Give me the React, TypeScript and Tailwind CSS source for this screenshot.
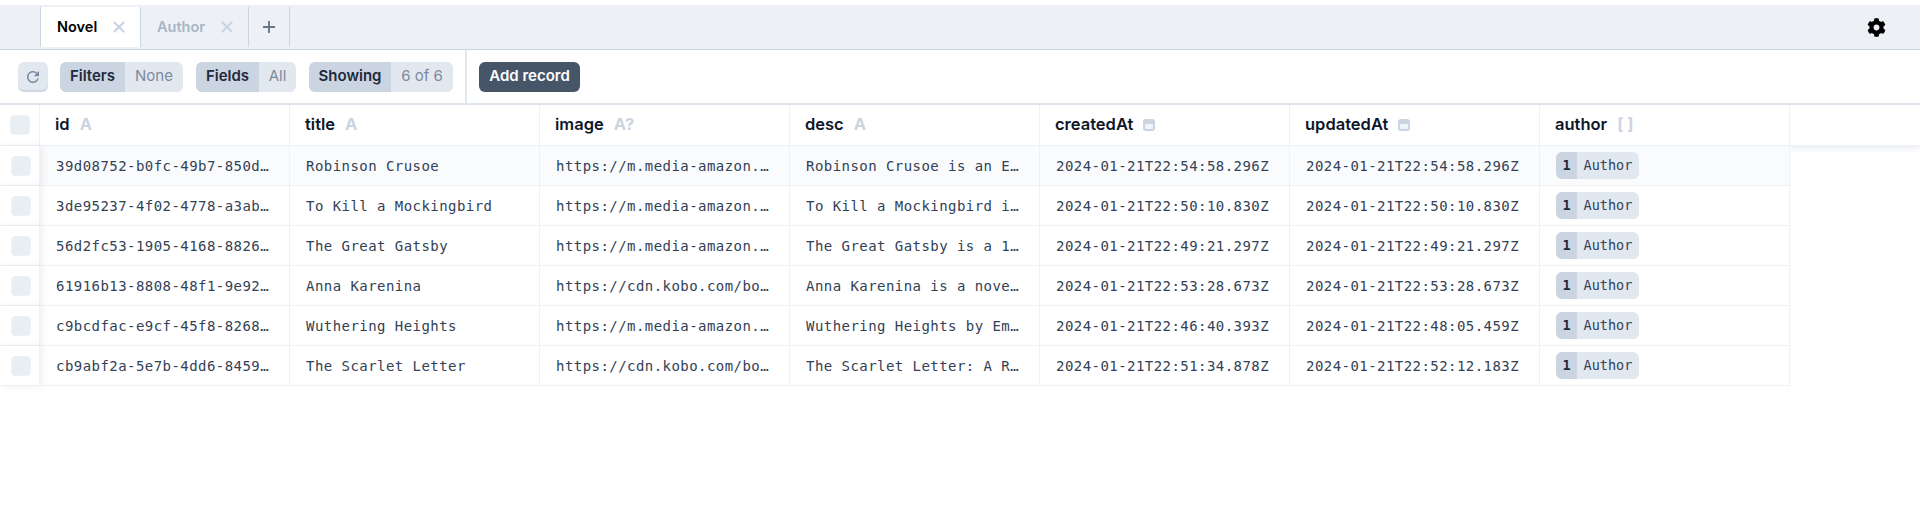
import { Plus, X } from 'lucide-react'
import { FaCog } from 'react-icons/fa'
import { MdRefresh } from 'react-icons/md'

const rows = [
  ['39d08752-b0fc-49b7-850d-3f1a9c2e7b10', 'Robinson Crusoe', 'https://m.media-amazon.com/images/I/71robinson.jpg', 'Robinson Crusoe is an English adventure novel', '2024-01-21T22:54:58.296Z', '2024-01-21T22:54:58.296Z'],
  ['3de95237-4f02-4778-a3ab-91c4d7e2a608', 'To Kill a Mockingbird', 'https://m.media-amazon.com/images/I/81mocking.jpg', 'To Kill a Mockingbird is a novel by Harper Lee', '2024-01-21T22:50:10.830Z', '2024-01-21T22:50:10.830Z'],
  ['56d2fc53-1905-4168-8826-07b3e5f1c942', 'The Great Gatsby', 'https://m.media-amazon.com/images/I/71gatsby.jpg', 'The Great Gatsby is a 1925 novel by F. Scott', '2024-01-21T22:49:21.297Z', '2024-01-21T22:49:21.297Z'],
  ['61916b13-8808-48f1-9e92-c5a07d3b8e14', 'Anna Karenina', 'https://cdn.kobo.com/book-images/anna-karenina.jpg', 'Anna Karenina is a novel by Leo Tolstoy', '2024-01-21T22:53:28.673Z', '2024-01-21T22:53:28.673Z'],
  ['c9bcdfac-e9cf-45f8-8268-b2d6f4a1e037', 'Wuthering Heights', 'https://m.media-amazon.com/images/I/81wuthering.jpg', 'Wuthering Heights by Emily Bronte', '2024-01-21T22:46:40.393Z', '2024-01-21T22:48:05.459Z'],
  ['cb9abf2a-5e7b-4dd6-8459-e1f0c7b3d286', 'The Scarlet Letter', 'https://cdn.kobo.com/book-images/scarlet-letter.jpg', 'The Scarlet Letter: A Romance by Nathaniel', '2024-01-21T22:51:34.878Z', '2024-01-21T22:52:12.183Z'],
]

const columns = [
  { name: 'id', type: 'A' },
  { name: 'title', type: 'A' },
  { name: 'image', type: 'A?' },
  { name: 'desc', type: 'A' },
  { name: 'createdAt', type: 'date' },
  { name: 'updatedAt', type: 'date' },
  { name: 'author', type: '[ ]' },
]

function DateIcon() {
  return (
    <svg width="12" height="12" viewBox="0 0 12 12" className="mt-px">
      <rect x="0" y="0" width="12" height="12" rx="3" fill="#cbd5e1" />
      <rect x="2" y="5" width="8" height="5" rx="1" fill="#f1f5f9" />
    </svg>
  )
}

function Toggle({ label, value, labelWidth, valueWidth }: { label: string; value: string; labelWidth: string; valueWidth: string }) {
  return (
    <div className="flex h-[30px] rounded-md overflow-hidden shadow-[inset_0_-2px_0_rgba(100,116,139,0.15)] text-[15px]">
      <div className={`${labelWidth} flex items-center justify-center bg-[#cbd5e1] text-[#1e293b] font-semibold`}>{label}</div>
      <div className={`${valueWidth} flex items-center justify-center bg-[#e2e8f0] text-[#7c8aa0]`}>{value}</div>
    </div>
  )
}

function Checkbox() {
  return <div className="w-5 h-5 rounded-[4px] bg-[#e9eef3] border border-[#eef2f6]" />
}

export default function App() {
  return (
    <div className="min-h-[517px] bg-white pt-[5px] font-['Inter',sans-serif] text-[#0f172a]">
      {/* tab bar */}
      <div className="flex items-center h-[45px] bg-[#edf1f5] border-b border-[#cbd5e1]">
        <div className="w-[41px] h-10 border-r border-[#cbd5e1]" />
        <div className="w-[100px] h-10 flex items-center bg-white border-r border-[#cbd5e1] pl-4 text-[14.5px] font-semibold text-black">
          Novel
          <X size={18} strokeWidth={3} className="ml-[13px] text-[#cbd5e1]" />
        </div>
        <div className="w-[108px] h-10 flex items-center border-r border-[#cbd5e1] pl-4 text-[14.5px] font-semibold text-[#a8b5c6]">
          Author
          <X size={18} strokeWidth={3} className="ml-[13px] text-[#cbd5e1]" />
        </div>
        <div className="w-[41px] h-10 flex items-center justify-center border-r border-[#cbd5e1] text-[#64748b]">
          <Plus size={18} strokeWidth={2.5} />
        </div>
        <div className="flex-1" />
        <FaCog size={19} className="mr-[34px] text-black" />
      </div>

      {/* toolbar */}
      <div className="flex h-[55px] border-b-2 border-[#e2e8f0]">
        <div className="flex items-center gap-[13px] w-[467px] pl-[18px] border-r-2 border-[#e2e8f0]">
          <div className="w-[30px] h-[30px] mr-[-1px] flex items-center justify-center rounded-md bg-[#e2e8f0] text-[#7b8a9f] shadow-[inset_0_-2px_0_rgba(100,116,139,0.15)]">
            <MdRefresh size={18} />
          </div>
          <Toggle label="Filters" value="None" labelWidth="w-[65px]" valueWidth="w-[58px]" />
          <Toggle label="Fields" value="All" labelWidth="w-[63px]" valueWidth="w-[37px]" />
          <Toggle label="Showing" value="6 of 6" labelWidth="w-[82px]" valueWidth="w-[62px]" />
        </div>
        <div className="flex items-center pl-3">
          <div className="w-[101px] h-[30px] flex items-center justify-center rounded-md bg-[#475569] text-white text-[15px] font-semibold">
            Add record
          </div>
        </div>
      </div>

      {/* header */}
      <div className="flex h-[41px] border-b border-[#eef2f6] shadow-[0_2px_6px_rgba(100,116,139,0.15)]">
        <div className="w-10 shrink-0 flex items-center pl-[10px] border-r border-[#eef2f6]">
          <Checkbox />
        </div>
        {columns.map((col) => (
          <div key={col.name} className="w-[250px] shrink-0 flex items-center gap-[10px] pl-[15px] pb-px border-r border-[#eef2f6] text-[16.5px] font-semibold text-[#0f172a]">
            {col.name}
            {col.type === 'date' ? <DateIcon /> : <span className="text-[#cbd5e1] font-bold">{col.type}</span>}
          </div>
        ))}
      </div>

      {/* rows */}
      {rows.map((row, i) => (
        <div key={row[0]} className={`flex h-10 w-[1791px] ${i === 0 ? 'bg-[#fafbfd]' : 'bg-white'}`}>
          <div className="w-10 shrink-0 flex items-center pl-[11px] bg-white border-b border-r border-[#eef2f6] shadow-[2px_0_6px_rgba(100,116,139,0.12)]">
            <Checkbox />
          </div>
          {row.map((cell) => (
            <div key={cell} className="w-[250px] shrink-0 flex items-center px-4 border-b border-r border-[#eef2f6] font-['DejaVu_Sans_Mono',monospace] text-sm tracking-[0.45px] text-[#334155]">
              <span className="truncate">{cell}</span>
            </div>
          ))}
          <div className="w-[250px] shrink-0 flex items-center pl-4 border-b border-r border-[#eef2f6]">
            <div className="flex h-[27px] rounded-md overflow-hidden shadow-[inset_0_-2px_0_rgba(100,116,139,0.15)] text-[13.5px] font-['DejaVu_Sans_Mono',monospace]">
              <div className="w-[21px] flex items-center justify-center bg-[#cbd5e1] font-bold text-[#1e293b]">1</div>
              <div className="w-[62px] flex items-center justify-center bg-[#e2e8f0] text-[#334155]">Author</div>
            </div>
          </div>
        </div>
      ))}
    </div>
  )
}
